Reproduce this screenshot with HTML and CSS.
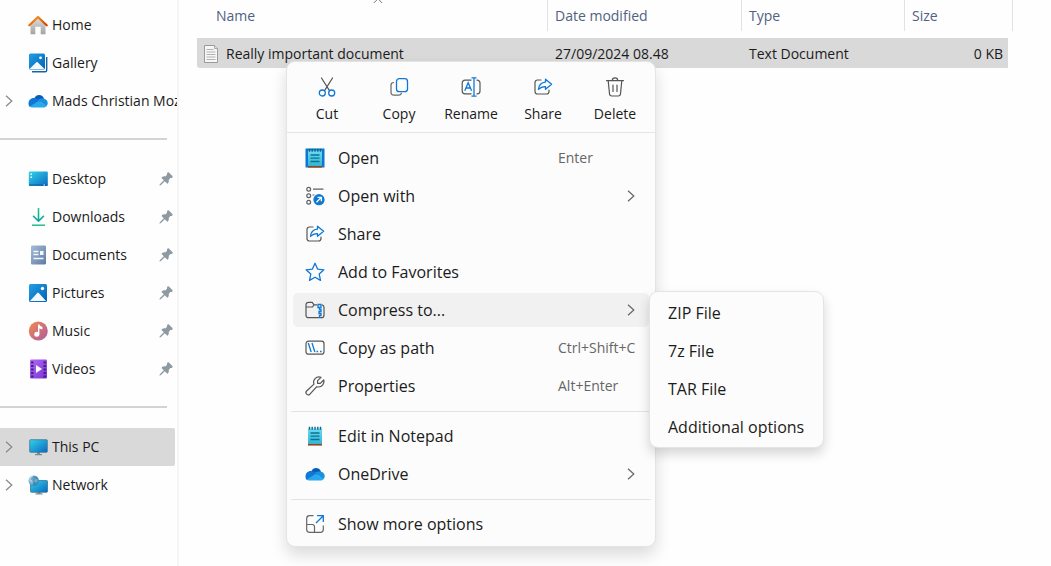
FILE: index.html
```html
<!DOCTYPE html>
<html lang="en">
<head>
<meta charset="utf-8">
<meta name="viewport" content="width=device-width, initial-scale=1">
<title>File Explorer</title>
<link rel="stylesheet" href="styles.css">
</head>
<body>
<svg class="defs" aria-hidden="true">
  <defs>
    <linearGradient id="g-roof" x1="0" y1="0" x2="1" y2="1"><stop offset="0" stop-color="#f9a01b"/><stop offset="1" stop-color="#d83b01"/></linearGradient>
    <linearGradient id="g-wall" x1="0" y1="0" x2="0" y2="1"><stop offset="0" stop-color="#dcdcdc"/><stop offset="1" stop-color="#a3a3a3"/></linearGradient>
    <linearGradient id="g-blue" x1="0" y1="0" x2="1" y2="1"><stop offset="0" stop-color="#1fa0e4"/><stop offset="1" stop-color="#0560b6"/></linearGradient>
    <linearGradient id="g-screen" x1="0" y1="0" x2="1" y2="1"><stop offset="0" stop-color="#33d3e6"/><stop offset="1" stop-color="#0869c5"/></linearGradient>
    <linearGradient id="g-down" x1="0" y1="0" x2="0" y2="1"><stop offset="0" stop-color="#22c58b"/><stop offset="1" stop-color="#0c9fa0"/></linearGradient>
    <linearGradient id="g-doc" x1="0" y1="0" x2="1" y2="1"><stop offset="0" stop-color="#a5bcd6"/><stop offset="1" stop-color="#5f7ba6"/></linearGradient>
    <linearGradient id="g-music" x1="0" y1="0" x2="1" y2="1"><stop offset="0" stop-color="#f18a4b"/><stop offset="1" stop-color="#ae5aa6"/></linearGradient>
    <linearGradient id="g-video" x1="0" y1="0" x2="1" y2="1"><stop offset="0" stop-color="#b26af2"/><stop offset="1" stop-color="#7a32d8"/></linearGradient>
    <linearGradient id="g-pad" x1="0" y1="0" x2="0" y2="1"><stop offset="0" stop-color="#6bdcf1"/><stop offset="1" stop-color="#36b2d6"/></linearGradient>
    <radialGradient id="g-globe" cx=".35" cy=".35" r=".7"><stop offset="0" stop-color="#d4effb"/><stop offset="1" stop-color="#2e83b4"/></radialGradient>
  </defs>
  <symbol id="chevron" viewBox="0 0 8 12"><path d="M1 .8 6.8 6 1 11.2" fill="none" stroke="currentColor" stroke-width="1.2"/></symbol>
  <symbol id="pin" viewBox="0 0 14 14"><path d="M8.6.6c.4-.4.9-.4 1.300 0l3.500 3.500c.4.4.4.9 0 1.300l-.7.5c-.5.2-.9.2-1.300.2L9.700 7.900c.3 1.300.1 2.500-.9 3.500l-.5.3-2.500-2.400L1.700 13.200.4 13.500l.4-1.200 4-4.100L2.500 5.900l.4-.6c1-.9 2.200-1.100 3.400-.8L8 2.700c-.1-.6 0-1.500.6-2.100Z" fill="#8e9aa2"/></symbol>
  <symbol id="cloud" viewBox="0 0 20 20">
    <path d="M6.200 7.300C7.300 5 9 3.900 11 3.900c2.500 0 4.500 1.600 5 4l-4 3.500Z" fill="#0a5cba"/>
    <path d="M.5 12.500c0-3 2.300-5.400 5.200-5.400 1.500 0 2.500.5 3.600 1.200l4 2.800-11.500 4.800C1 15.200.5 14 .5 12.500Z" fill="#0f78d4"/>
    <path d="M9.500 9c1.700-1 3.500-1.600 5.500-1.400 2.600.1 4.700 2.200 4.700 4.400 0 1.300-.5 2.500-1.300 3.200Z" fill="#1791e0"/>
    <path d="M1.700 15.400 10.600 10l8.200 4.700c-.7 1.200-1.800 1.800-3.300 1.800H4.800c-1.300 0-2.400-.4-3.100-1.100Z" fill="#2aa8ee"/>
  </symbol>
  <symbol id="picture" viewBox="0 0 20 20"><rect x="1" y="1" width="18" height="18" rx="1.500" fill="url(#g-blue)"/><path d="m2 18 7-7.700c.5-.6 1.400-.6 2 0l7 7.700Z" fill="#f3f9fd"/><circle cx="14.500" cy="5.500" r="1.700" fill="#fff"/></symbol>
  <symbol id="share" viewBox="0 0 20 20"><path d="M8 3H4.500A2.500 2.500 0 0 0 2 5.500v9A2.500 2.500 0 0 0 4.500 17h9a2.500 2.500 0 0 0 2.500-2.500V13" fill="none" stroke="#555" stroke-width="1.200" stroke-linecap="round"/><path d="M12.500 2.200 18.600 7.300l-6.100 5V9.600c-3-.1-5 .6-7 2.800.3-4 2.800-7 7-7.300Z" fill="none" stroke="#0f78d4" stroke-width="1.300" stroke-linejoin="round"/></symbol>
  <symbol id="notepad" viewBox="0 0 20 20"><path d="M3 2.500h14V18H3Z" fill="url(#g-pad)"/><path d="M3 18h14v1.600H3Z" fill="#8c4a21"/><path d="M4.500.8v3M7.200.8v3M10 .8v3M12.800.8v3M15.500.8v3" stroke="#12648c" stroke-width="1.400"/><path d="M5.500 7h9M5.500 10.200h9M5.500 13.500h9" stroke="#087393" stroke-width="1.300"/></symbol>
</svg>

<div class="explorer">
  <nav class="sidebar" aria-label="Locations">
    <ul class="places">
      <li><a class="place" href="#home"><span class="expander"></span>
        <svg class="icon" viewBox="0 0 20 20"><path d="M2.500 9 10 3l7.500 6v10.300h-4.800v-7.500H7.300v7.500H2.500Z" fill="url(#g-wall)"/><path d="m1.300 10.300 8.700-8.300 8.700 8.300" fill="none" stroke="url(#g-roof)" stroke-width="2.200" stroke-linejoin="round" stroke-linecap="round"/></svg>
        <span class="label">Home</span></a></li>
      <li><a class="place" href="#gallery"><span class="expander"></span>
        <svg class="icon" viewBox="0 0 20 20"><path d="M4 18.700h13.200a1.500 1.500 0 0 0 1.500-1.500V4" fill="none" stroke="#1464a8" stroke-width="1.400"/><rect x="1" y=".5" width="16" height="16" rx="1.500" fill="url(#g-blue)"/><path d="m1.500 16 6.300-6.300c.8-.8 1.600-.8 2.400 0l6.300 6.300Z" fill="#f3f9fd"/><circle cx="12.500" cy="4.800" r="1.400" fill="#fff"/></svg>
        <span class="label">Gallery</span></a></li>
      <li><a class="place" href="#onedrive"><span class="expander"><svg class="chevron"><use href="#chevron"/></svg></span>
        <svg class="icon"><use href="#cloud"/></svg><span class="label">Mads Christian Moz</span></a></li>
    </ul>
    <hr class="rule">
    <ul class="places">
      <li><a class="place" href="#desktop"><span class="expander"></span>
        <svg class="icon" viewBox="0 0 20 20"><rect x=".8" y="2.500" width="19" height="14.500" rx="1" fill="url(#g-screen)"/><path d="M2.500 4.500H4v1.500H2.500ZM2.500 7.500H4V9H2.500Z" fill="#fff"/><path d="M1 16h18.500" stroke="#0b5c9d"/><path d="M15.500 16H17" stroke="#fff"/></svg>
        <span class="label">Desktop</span><svg class="pin"><use href="#pin"/></svg></a></li>
      <li><a class="place" href="#downloads"><span class="expander"></span>
        <svg class="icon" viewBox="0 0 20 20"><path d="M9.700 1h1.600v11.300l4-4L16.400 9.400l-5.900 5.900-5.900-5.900 1.100-1.100 4 4Z" fill="url(#g-down)"/><path d="M4 18.200h13" stroke="#20bd88" stroke-width="1.500"/></svg>
        <span class="label">Downloads</span><svg class="pin"><use href="#pin"/></svg></a></li>
      <li><a class="place" href="#documents"><span class="expander"></span>
        <svg class="icon" viewBox="0 0 20 20"><rect x="3" y=".5" width="15" height="19" rx="1.300" fill="url(#g-doc)"/><path d="M5.500 6.500h5M5.500 9.500h5M5.500 13.500h10" stroke="#f4f8fc" stroke-width="1.300"/><path d="M12 6h3.500v4H12Z" fill="#f4f8fc"/></svg>
        <span class="label">Documents</span><svg class="pin"><use href="#pin"/></svg></a></li>
      <li><a class="place" href="#pictures"><span class="expander"></span>
        <svg class="icon"><use href="#picture"/></svg>
        <span class="label">Pictures</span><svg class="pin"><use href="#pin"/></svg></a></li>
      <li><a class="place" href="#music"><span class="expander"></span>
        <svg class="icon" viewBox="0 0 20 20"><circle cx="10.300" cy="10" r="9.500" fill="url(#g-music)"/><circle cx="8.800" cy="13.200" r="2.500" fill="#fff"/><path d="M10 3.500h1.400c.4 1.500 1.400 1.800 3 2.200v2.500c-1.300 0-2.200-.3-3-1v6H10Z" fill="#fff"/></svg>
        <span class="label">Music</span><svg class="pin"><use href="#pin"/></svg></a></li>
      <li><a class="place" href="#videos"><span class="expander"></span>
        <svg class="icon" viewBox="0 0 20 20"><rect x="2" y=".5" width="17" height="19" rx="1.300" fill="url(#g-video)"/><path d="M4.300 2.500v16M16.700 2.500v16" stroke="#43207d" stroke-width="2.400" stroke-dasharray="2 1.500"/><path d="m8 6 6 4-6 4Z" fill="#fff"/></svg>
        <span class="label">Videos</span><svg class="pin"><use href="#pin"/></svg></a></li>
    </ul>
    <hr class="rule">
    <ul class="places">
      <li><a class="place place-current" href="#pc" aria-current="page"><span class="expander"><svg class="chevron"><use href="#chevron"/></svg></span>
        <svg class="icon" viewBox="0 0 20 20"><path d="M9 15h3v2h2v1.300H7V17h2Z" fill="#7b8b96"/><rect x="1.700" y="2.700" width="17.600" height="12.600" rx=".8" fill="url(#g-screen)" stroke="#40768f" stroke-width=".8"/></svg>
        <span class="label">This PC</span></a></li>
      <li><a class="place" href="#network"><span class="expander"><svg class="chevron"><use href="#chevron"/></svg></span>
        <svg class="icon" viewBox="0 0 20 20"><path d="M9.500 17h3v1.300h2v1.200h-7v-1.200h2Z" fill="#7b8b96"/><rect x="2.500" y="5.500" width="17" height="11.800" rx=".8" fill="url(#g-screen)" stroke="#40768f" stroke-width=".8"/><circle cx="5.700" cy="5.700" r="5.200" fill="url(#g-globe)"/><path d="M6 .8c2 0 4 1.500 4.500 3.500L8 4 6.500 6l2 2-2 2.700C5 9.500 4.500 8 5 6.500L2.500 4Z" fill="#327fab" opacity=".65"/></svg>
        <span class="label">Network</span></a></li>
    </ul>
  </nav>

  <main class="content">
    <table class="files">
      <colgroup><col><col class="col-date"><col class="col-type"><col class="col-size"></colgroup>
      <thead>
        <tr><th class="head-name" scope="col" aria-sort="ascending">Name<svg class="sort" viewBox="0 0 10 6"><path d="M.8 5 5 .8 9.200 5" fill="none" stroke="#777"/></svg></th><th scope="col">Date modified</th><th scope="col">Type</th><th scope="col">Size</th></tr>
      </thead>
      <tbody>
        <tr>
          <td class="cell-name"><div class="file">
            <svg class="file-icon" viewBox="0 0 14 18"><path d="M.5.5h10l3 3v14H.5Z" fill="#f7f7f7" stroke="#9a9a9a"/><path d="M10.500.5v3h3" fill="#ddd" stroke="#9a9a9a" stroke-width=".8"/><path d="M2.500 4.500h7M2.500 7h9M2.500 9.500h9M2.500 12h9M2.500 14.500h9" stroke="#a8a8a8" stroke-width=".9"/></svg>
            <span>Really important document</span></div></td>
          <td>27/09/2024 08.48</td><td>Text Document</td><td class="cell-size">0 KB</td>
        </tr>
      </tbody>
    </table>
  </main>

  <div class="menu" role="menu" aria-label="File actions">
    <div class="commands">
      <button class="command" type="button"><svg class="icon" viewBox="0 0 20 20"><path d="m4.500 1 7.800 12.400M15.500 1 7.700 13.400" fill="none" stroke="#555" stroke-width="1.200" stroke-linecap="round"/><circle cx="5.300" cy="16" r="3" fill="none" stroke="#0f78d4" stroke-width="1.300"/><circle cx="14.700" cy="16" r="3" fill="none" stroke="#0f78d4" stroke-width="1.300"/></svg>Cut</button>
      <button class="command" type="button"><svg class="icon" viewBox="0 0 20 20"><path d="M5 5.500C3 5.500 2 6.500 2 8v7c0 2 1.200 3.200 3 3.200h4.500c1.800 0 2.800-.8 3-2.500" fill="none" stroke="#666" stroke-width="1.200"/><rect x="7.500" y="1.700" width="11" height="13" rx="2.800" fill="none" stroke="#0f78d4" stroke-width="1.300"/></svg>Copy</button>
      <button class="command" type="button"><svg class="icon" viewBox="0 0 20 20"><path d="M10.500 3.200H4A2.800 2.800 0 0 0 1.200 6v8A2.800 2.800 0 0 0 4 16.800h6.500M15.500 3.200h.7A2.800 2.800 0 0 1 19 6v8a2.800 2.800 0 0 1-2.800 2.800h-.7" fill="none" stroke="#555" stroke-width="1.200"/><path d="M10.500.8h5M13 .8v18.400M10.500 19.200h5M3.800 13.700l3.400-8 3.400 8M5 11h4.400" fill="none" stroke="#0f78d4" stroke-width="1.300"/></svg>Rename</button>
      <button class="command" type="button"><svg class="icon"><use href="#share"/></svg>Share</button>
      <button class="command" type="button"><svg class="icon" viewBox="0 0 20 20"><path d="M1.500 3.600h17M7.300 3.400C7.300 1.800 8.200.8 10 .8s2.700 1 2.700 2.600M3.200 3.800l1.300 13c.1 1.200 1 2.200 2.200 2.200h6.600c1.200 0 2.100-1 2.200-2.200l1.300-13M8 8v6.500M12 8v6.500" fill="none" stroke="#555" stroke-width="1.200" stroke-linecap="round"/></svg>Delete</button>
    </div>
    <ul class="items">
      <li><button class="item" type="button" role="menuitem"><svg class="icon" viewBox="0 0 20 20"><path d="M.5.500h19v19H.5Z" fill="#0c77d1"/><use href="#notepad" width="20" height="20"/></svg><span>Open</span><kbd class="keys">Enter</kbd></button></li>
      <li><button class="item" type="button" role="menuitem"><svg class="icon" viewBox="0 0 20 20"><g fill="none" stroke="#606060" stroke-width="1.200"><circle cx="3.700" cy="3.200" r="1.900"/><circle cx="3.700" cy="9.800" r="1.900"/><circle cx="3.700" cy="16.200" r="1.900"/><path d="M8 3.200h10.500M7.500 9h2"/></g><circle cx="14" cy="13.700" r="5.600" fill="#0f78d4"/><path d="m11.500 16.200 4.800-4.800M12.500 11.300h3.900v3.900" fill="none" stroke="#fff" stroke-width="1.300"/></svg><span>Open with</span><svg class="arrow"><use href="#chevron"/></svg></button></li>
      <li><button class="item" type="button" role="menuitem"><svg class="icon"><use href="#share"/></svg><span>Share</span></button></li>
      <li><button class="item" type="button" role="menuitem"><svg class="icon" viewBox="0 0 20 20"><path d="m10 1.300 2.600 5.800 6.300.7-4.700 4.300 1.300 6.300L10 15.200l-5.500 3.200 1.300-6.300L1.100 7.800l6.300-.7Z" fill="none" stroke="#0f78d4" stroke-width="1.300" stroke-linejoin="round"/></svg><span>Add to Favorites</span></button></li>
      <li class="has-submenu">
        <button class="item item-open" type="button" role="menuitem" aria-haspopup="menu" aria-expanded="true"><svg class="icon" viewBox="0 0 20 20"><path d="M12 4.800H9L7.200 2.300H3.500A2.500 2.500 0 0 0 1 4.800v10.400a2.500 2.500 0 0 0 2.500 2.500h13a2.500 2.500 0 0 0 2.500-2.500V7.300a2.500 2.500 0 0 0-2-2.400M1 7h6.500L9 4.800" fill="none" stroke="#555" stroke-width="1.200"/><path d="M13 4.500h3v3h-3ZM14.500 7.500v2H16v2h-2v2h2v2h-1.500V18" fill="none" stroke="#0f78d4" stroke-width="1.300"/></svg><span>Compress to...</span><svg class="arrow"><use href="#chevron"/></svg></button>
        <ul class="submenu" role="menu">
          <li><button class="subitem" type="button" role="menuitem">ZIP File</button></li>
          <li><button class="subitem" type="button" role="menuitem">7z File</button></li>
          <li><button class="subitem" type="button" role="menuitem">TAR File</button></li>
          <li><button class="subitem" type="button" role="menuitem">Additional options</button></li>
        </ul>
      </li>
      <li><button class="item" type="button" role="menuitem"><svg class="icon" viewBox="0 0 20 20"><rect x="1" y="3.200" width="18" height="13" rx="2.500" fill="none" stroke="#555" stroke-width="1.200"/><path d="m3.300 5 2.900 9M7 5l2.900 9" stroke="#0f78d4" stroke-width="1.300"/><path d="M11.500 12.700h1.600v1.600h-1.600ZM15 12.700h1.600v1.600H15Z" fill="#0f78d4"/></svg><span>Copy as path</span><kbd class="keys">Ctrl+Shift+C</kbd></button></li>
      <li><button class="item" type="button" role="menuitem"><svg class="icon" viewBox="0 0 20 20"><path d="M16 1.300 12.600 4.700v2.700h2.700L18.700 4c1 3.600-1.700 7-5.200 7-.6 0-1.200-.1-1.700-.3l-6.900 7.500a2.300 2.300 0 0 1-3.300-3.200L9 8.100C7.400 4.100 11.200-.3 16 1.300Z" fill="none" stroke="#555" stroke-width="1.200" stroke-linejoin="round"/></svg><span>Properties</span><kbd class="keys">Alt+Enter</kbd></button></li>
      <li class="divider" role="separator"></li>
      <li><button class="item" type="button" role="menuitem"><svg class="icon"><use href="#notepad"/></svg><span>Edit in Notepad</span></button></li>
      <li><button class="item" type="button" role="menuitem"><svg class="icon"><use href="#cloud"/></svg><span>OneDrive</span><svg class="arrow"><use href="#chevron"/></svg></button></li>
      <li class="divider" role="separator"></li>
      <li><button class="item" type="button" role="menuitem"><svg class="icon" viewBox="0 0 20 20"><path d="M8.500 1.700h-4A2.800 2.800 0 0 0 1.700 4.500v11a2.800 2.800 0 0 0 2.800 2.800h11a2.800 2.800 0 0 0 2.800-2.800v-4M1.700 10.500h5.500A2.300 2.300 0 0 1 9.500 12.800v5.500" fill="none" stroke="#666" stroke-width="1.200"/><path d="M12 1.700h6.300V8M18.300 1.700 11 9" fill="none" stroke="#0f78d4" stroke-width="1.300"/></svg><span>Show more options</span></button></li>
    </ul>
  </div>
</div>
</body>
</html>
```
FILE: styles.css
```css
* { box-sizing: border-box; }

body {
  margin: 0;
  background: #fefefe;
  color: #1b1b1b;
  font: 14px/20px "Open Sans", "Noto Sans", sans-serif;
}

ul { margin: 0; padding: 0; list-style: none; }

button {
  border: 0;
  background: none;
  color: inherit;
  font: inherit;
}

.defs { position: absolute; width: 0; height: 0; }

.icon { display: block; width: 20px; height: 20px; flex: none; }

.explorer { position: relative; display: flex; min-height: 100vh; }

/* Sidebar */
.sidebar {
  flex: none;
  width: 179px;
  padding: 6px 2px 0 0;
  border-right: 2px solid #f5f5f5;
}

.place {
  display: flex;
  align-items: center;
  height: 38px;
  color: inherit;
  text-decoration: none;
}

.place-current { background: #d9d9d9; border-radius: 0 2px 2px 0; }

.expander { flex: none; width: 28px; padding-left: 5px; color: #888; }

.chevron { display: block; width: 8px; height: 12px; }

.label { flex: 1; padding-left: 4px; overflow: hidden; white-space: nowrap; }

.label:last-child { margin-right: -2px; }

.pin { flex: none; width: 14px; height: 14px; margin-right: 2px; }

.rule {
  height: 2px;
  margin: 18px 8px 20px 0;
  border: 0;
  background: #d4d4d4;
}

/* File list */
.content { flex: 1; padding: 0 38px 0 18px; }

.files {
  width: 100%;
  border-spacing: 0;
  table-layout: fixed;
}

.col-date { width: 194px; }
.col-type { width: 163px; }
.col-size { width: 108px; }

.files th {
  height: 31px;
  padding: 0 7px;
  border-right: 1px solid #e2e2e2;
  color: #4f6281;
  font-weight: 400;
  text-align: left;
}

.files .head-name { position: relative; padding-left: 19px; }

.sort { position: absolute; top: -2px; left: 176px; width: 10px; height: 6px; }

.files td {
  height: 37px;
  padding: 2px 7px 0;
  border-top: 7px solid transparent;
  background: #d9d9d9;
  background-clip: padding-box;
}

.files .cell-name { padding-left: 7px; border-radius: 2px 0 0 2px; }

.files .cell-size {
  padding-right: 5px;
  border-right: 5px solid transparent;
  text-align: right;
}

.file { display: flex; align-items: center; gap: 8px; }

.file-icon { width: 14px; height: 18px; }

/* Context menu */
.menu, .submenu {
  position: absolute;
  border: 1px solid #e4e4e4;
  border-radius: 9px;
  background: #fcfcfc;
}

.menu {
  top: 61px;
  left: 286px;
  width: 370px;
  box-shadow: 0 8px 16px rgba(0, 0, 0, .14);
}

.commands {
  display: flex;
  padding: 0 4px;
  border-bottom: 1px solid #e5e5e5;
}

.command {
  display: flex;
  flex: 1;
  flex-direction: column;
  align-items: center;
  gap: 7px;
  padding: 15px 0 8px;
}

.items {
  display: flex;
  flex-direction: column;
  gap: 4px;
  padding: 8px 6px 5px;
  font-size: 16px;
}

.item {
  display: grid;
  grid-template-columns: 20px 1fr 81px;
  column-gap: 13px;
  align-items: center;
  width: 100%;
  height: 34px;
  padding: 0 10px 0 12px;
  border-radius: 5px;
  text-align: left;
  white-space: nowrap;
}

.item-open { background: #f1f1f1; }

.keys { color: #666; font-family: inherit; font-size: 14px; }

.arrow { justify-self: end; width: 8px; height: 12px; margin-right: 4px; color: #666; }

.divider { height: 1px; margin: 4px -2px 3px; background: #e3e3e3; }

.has-submenu { position: relative; }

.submenu {
  top: -2px;
  left: 100%;
  display: flex;
  flex-direction: column;
  gap: 4px;
  width: 175px;
  padding: 4px 0 3px;
  box-shadow: 0 6px 12px rgba(0, 0, 0, .16);
}

.subitem {
  width: 100%;
  height: 34px;
  padding: 0 18px;
  text-align: left;
  white-space: nowrap;
}
```
